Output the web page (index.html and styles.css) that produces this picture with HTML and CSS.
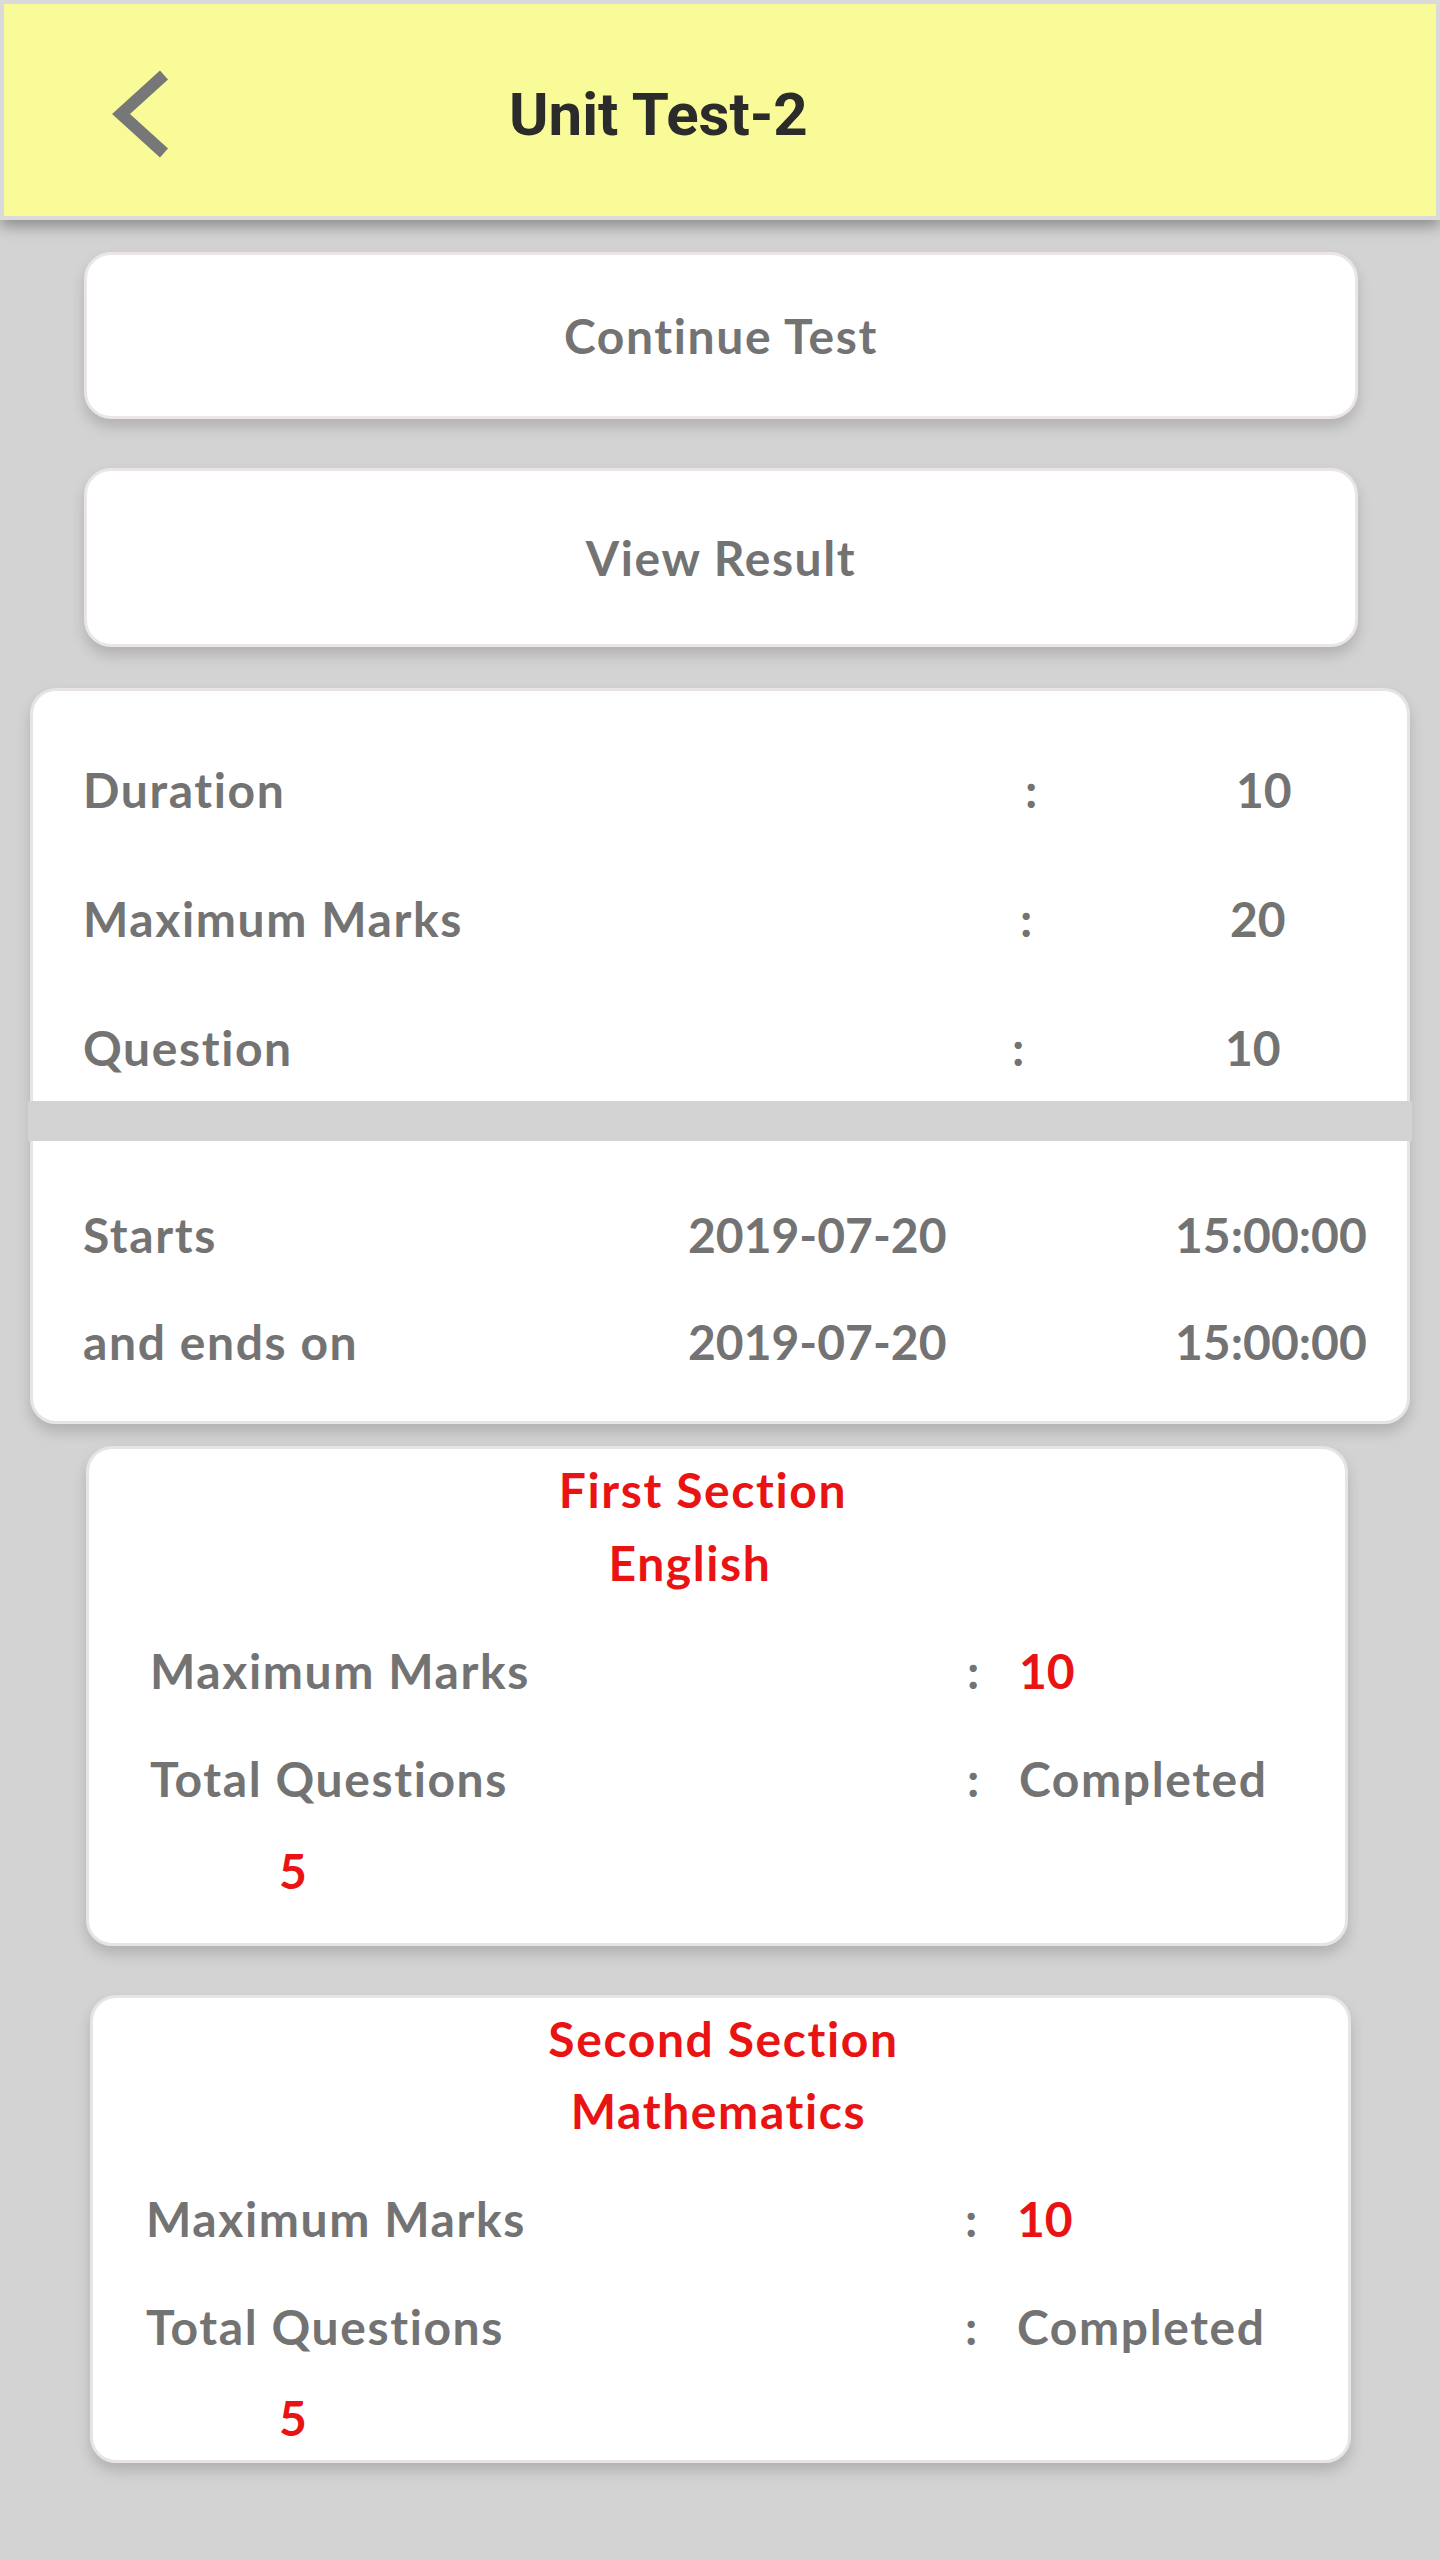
FILE: index.html
```html
<!DOCTYPE html>
<html lang="en">
<head>
<meta charset="utf-8">
<title>Unit Test-2</title>
<link rel="stylesheet" href="styles.css">
</head>
<body>
<div class="page">
  <header class="topbar">
    <svg class="back" width="70" height="100" viewBox="0 0 70 100" aria-hidden="true">
      <polyline points="60,13 17,52 60,91" fill="none" stroke="#777777" stroke-width="12" stroke-linecap="butt" stroke-linejoin="miter"/>
    </svg>
    <h1 class="title">Unit Test-2</h1>
  </header>

  <main class="content">
    <div class="btn-card btn-continue">Continue Test</div>
    <div class="btn-card btn-result">View Result</div>

    <section class="info-card">
      <div class="info-top">
        <div class="info-row r1"><span>Duration</span><span>:</span><span class="num">10</span></div>
        <div class="info-row r2"><span>Maximum Marks</span><span>:</span><span class="num">20</span></div>
        <div class="info-row r3"><span>Question</span><span>:</span><span class="num">10</span></div>
      </div>
      <div class="band"></div>
      <div class="info-bottom">
        <div class="date-row"><span>Starts</span><span class="num">2019-07-20</span><span class="num">15:00:00</span></div>
        <div class="date-row"><span>and ends on</span><span class="num">2019-07-20</span><span class="num">15:00:00</span></div>
      </div>
    </section>

    <section class="sec-card sec-first">
      <div class="sec-title">First Section</div>
      <div class="sec-subject">English</div>
      <div class="sec-row"><span>Maximum Marks</span><span>:</span><span class="red num">10</span></div>
      <div class="sec-row"><span>Total Questions</span><span>:</span><span>Completed</span></div>
      <div class="sec-five red num">5</div>
    </section>

    <section class="sec-card sec-second">
      <div class="sec-title">Second Section</div>
      <div class="sec-subject">Mathematics</div>
      <div class="sec-row"><span>Maximum Marks</span><span>:</span><span class="red num">10</span></div>
      <div class="sec-row"><span>Total Questions</span><span>:</span><span>Completed</span></div>
      <div class="sec-five red num">5</div>
    </section>
  </main>
</div>
</body>
</html>
```

FILE: styles.css
```css
* { box-sizing: border-box; }

html, body {
  margin: 0;
  padding: 0;
  background: #d3d3d3;
}

body {
  font-family: Lato, "Open Sans", sans-serif;
  font-weight: 700;
  font-size: 48px;
  letter-spacing: 1.6px;
  color: #737373;
}

.num { letter-spacing: 0; }

.page {
  width: 1440px;
  min-height: 2560px;
  background: #d3d3d3;
}

.topbar {
  height: 220px;
  background: #f8fb98;
  border: 4px solid #dadada;
  display: flex;
  align-items: center;
  padding-left: 100px;
  box-shadow: 0 6px 14px rgba(0, 0, 0, 0.35);
  position: relative;
  z-index: 2;
}

.back {
  display: block;
  flex: none;
  margin-top: 4px;
}

.title {
  margin: 9px 0 0 335px;
  font-family: Roboto, "Liberation Sans", sans-serif;
  font-weight: 700;
  font-size: 60px;
  line-height: 70px;
  letter-spacing: 0;
  color: #2b2b2b;
}

.content {
  display: flex;
  flex-direction: column;
  align-items: flex-start;
  padding-top: 32px;
}

.btn-card {
  margin-left: 84px;
  width: 1274px;
  background: #ffffff;
  border: 3px solid #ebe5e5;
  border-radius: 27px;
  display: flex;
  align-items: center;
  justify-content: center;
  line-height: 64px;
  box-shadow: 0 8px 14px rgba(0, 0, 0, 0.16);
}

.btn-continue { height: 167px; }

.btn-result {
  height: 179px;
  margin-top: 49px;
}

.info-card {
  margin-top: 41px;
  margin-left: 30px;
  width: 1380px;
  background: #ffffff;
  border: 3px solid #e9e4e4;
  border-radius: 26px;
  box-shadow: 0 8px 14px rgba(0, 0, 0, 0.16);
}

.info-top {
  padding: 67px 0 21px 50px;
  display: flex;
  flex-direction: column;
  gap: 65px;
}

.info-row {
  display: grid;
  line-height: 64px;
  white-space: nowrap;
}

.info-row.r1 { grid-template-columns: 942px 211px auto; }
.info-row.r2 { grid-template-columns: 937px 210px auto; }
.info-row.r3 { grid-template-columns: 929px 213px auto; }

.band {
  height: 40px;
  margin: 0 -5px;
  background: #d3d3d3;
}

.info-bottom {
  padding: 62px 0 47px 50px;
  display: flex;
  flex-direction: column;
  gap: 43px;
}

.date-row {
  display: grid;
  grid-template-columns: 605px 487px auto;
  line-height: 64px;
  white-space: nowrap;
}

.sec-card {
  background: #ffffff;
  border: 3px solid #e9e4e4;
  border-radius: 26px;
  box-shadow: 0 8px 14px rgba(0, 0, 0, 0.16);
  display: flex;
  flex-direction: column;
  line-height: 64px;
  white-space: nowrap;
}

.sec-title,
.sec-subject {
  color: #e91313;
  text-align: center;
}

.sec-subject { margin-top: 9px; }

.sec-row {
  display: grid;
  margin-top: 44px;
}

.red { color: #e91313; }

.sec-five { margin-top: 28px; }

.sec-first {
  margin-top: 22px;
  margin-left: 86px;
  width: 1262px;
  padding: 9px 0 40px 61px;
}

.sec-first .sec-title { padding-right: 89px; }
.sec-first .sec-subject { padding-right: 115px; }
.sec-first .sec-row { grid-template-columns: 817px 52px auto; }
.sec-first .sec-five { padding-left: 129px; }

.sec-second {
  margin-top: 49px;
  margin-left: 90px;
  width: 1261px;
  padding: 9px 0 10px 53px;
}

.sec-second .sec-title { padding-right: 47px; }
.sec-second .sec-subject { margin-top: 8px; padding-right: 57px; }
.sec-second .sec-row { grid-template-columns: 819px 52px auto; }
.sec-second .sec-five { margin-top: 27px; padding-left: 133px; }
```
